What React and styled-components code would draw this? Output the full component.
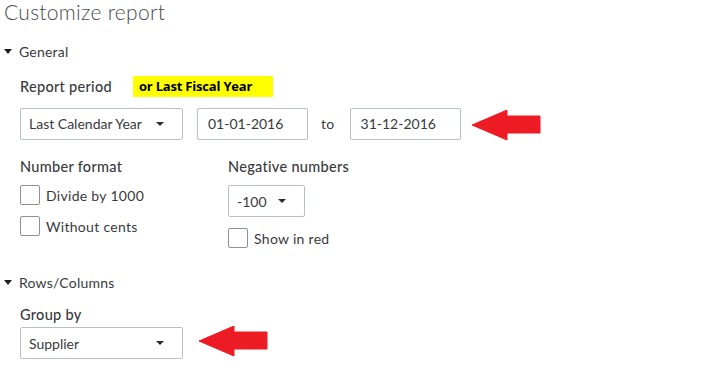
import React from "react";
import styled, { createGlobalStyle } from "styled-components";

const ink = "#393a3d";
const line = "#babec5";
const red = "#ed1c24";

const GlobalStyle = createGlobalStyle`
  html, body {
    margin: 0;
    padding: 0;
    background: #fff;
  }
  body {
    font-family: "Lato", "Open Sans", sans-serif;
    color: ${ink};
  }
`;

const Page = styled.div`
  width: 719px;
  height: 373px;
  overflow: hidden;
  padding: 0 0 0 4px;
  box-sizing: border-box;
`;

const Title = styled.h1`
  margin: 0;
  font-size: 21px;
  font-weight: 300;
  line-height: 24px;
  color: #4a4b4e;
  letter-spacing: 0.3px;
`;

const SectionHead = styled.div`
  display: flex;
  align-items: center;
  gap: 7px;
  height: 16px;
  margin-top: ${(p) => p.$top}px;
  font-size: 14px;
  letter-spacing: 0.2px;
`;

const Caret = styled.span`
  width: 0;
  height: 0;
  border-left: 4.5px solid transparent;
  border-right: 4.5px solid transparent;
  border-top: 5px solid #1f1f1f;
`;

const Body = styled.div`
  padding-left: 16px;
`;

const LabelRow = styled.div`
  display: flex;
  align-items: center;
  margin-top: ${(p) => p.$top}px;
  height: ${(p) => p.$h || 16}px;
`;

const Label = styled.div`
  font-size: 14.5px;
  font-weight: 500;
  color: ${ink};
  line-height: 16px;
  letter-spacing: 0.3px;
`;

const Highlight = styled.div`
  margin-left: 21px;
  width: 140px;
  height: 21px;
  background: #ffff00;
  color: #000;
  font-family: "Open Sans", sans-serif;
  font-weight: 700;
  font-size: 13px;
  line-height: 21px;
  padding-left: 6px;
  box-sizing: border-box;
  letter-spacing: -0.2px;
`;

const ControlRow = styled.div`
  display: flex;
  align-items: center;
  margin-top: ${(p) => p.$top}px;
`;

const Select = styled.div`
  display: flex;
  align-items: center;
  justify-content: space-between;
  width: ${(p) => p.$w}px;
  height: ${(p) => p.$h || 32}px;
  margin-top: ${(p) => p.$top || 0}px;
  box-sizing: border-box;
  border: 1px solid ${line};
  border-radius: 2px;
  padding: 0 18px 0 8px;
  font-size: 14px;
  color: ${ink};
`;

const SmallCaret = styled.span`
  width: 0;
  height: 0;
  border-left: 4px solid transparent;
  border-right: 4px solid transparent;
  border-top: 4px solid #2b2b2b;
`;

const DateBox = styled.div`
  width: 111px;
  height: 32px;
  box-sizing: border-box;
  border: 1px solid ${line};
  border-radius: 2px;
  margin-left: ${(p) => p.$left}px;
  padding-left: 10px;
  display: flex;
  align-items: center;
  font-size: 14px;
`;

const To = styled.span`
  margin-left: 13px;
  font-size: 14px;
  letter-spacing: 0.3px;
`;

const Arrow = styled.svg`
  margin-left: ${(p) => p.$left}px;
  margin-top: ${(p) => p.$top || 0}px;
  flex: none;
`;

const Columns = styled.div`
  display: flex;
  margin-top: 18px;
`;

const Column = styled.div`
  width: ${(p) => p.$w}px;
  display: flex;
  flex-direction: column;
`;

const CheckRow = styled.label`
  display: flex;
  align-items: center;
  gap: 6px;
  margin-top: ${(p) => p.$top}px;
  font-size: 14px;
  letter-spacing: 0.3px;
  height: 20px;
`;

const Box = styled.span`
  width: 20px;
  height: 20px;
  box-sizing: border-box;
  border: 1px solid #8d9096;
  border-radius: 2px;
  background: #fff;
  flex: none;
`;

const RedArrow = ({ left, top }) => (
  <Arrow $left={left} $top={top} width="69" height="31" viewBox="0 0 69 31">
    <path
      d="M0 15 L35 0 L35 6 L68 6 L68 23 L35 23 L35 30 Z"
      fill={red}
      stroke={red}
      strokeWidth="1"
      strokeLinejoin="round"
    />
  </Arrow>
);

export default function App() {
  return (
    <Page>
      <GlobalStyle />
      <Title>Customize report</Title>

      <SectionHead $top={19}>
        <Caret />
        General
      </SectionHead>
      <Body>
        <LabelRow $top={17} $h={21}>
          <Label>Report period</Label>
          <Highlight>or Last Fiscal Year</Highlight>
        </LabelRow>
        <ControlRow $top={9}>
          <Select $w={163}>
            Last Calendar Year
            <SmallCaret />
          </Select>
          <DateBox $left={14}>01-01-2016</DateBox>
          <To>to</To>
          <DateBox $left={15}>31-12-2016</DateBox>
          <RedArrow left={11} top={4} />
        </ControlRow>

        <Columns>
          <Column $w={208}>
            <Label>Number format</Label>
            <CheckRow $top={10}>
              <Box />
              Divide by 1000
            </CheckRow>
            <CheckRow $top={11}>
              <Box />
              Without cents
            </CheckRow>
          </Column>
          <Column $w={200}>
            <Label>Negative numbers</Label>
            <Select $w={77} $top={10}>
              -100
              <SmallCaret />
            </Select>
            <CheckRow $top={11}>
              <Box />
              Show in red
            </CheckRow>
          </Column>
        </Columns>
      </Body>

      <SectionHead $top={26}>
        <Caret />
        Rows/Columns
      </SectionHead>
      <Body>
        <LabelRow $top={17}>
          <Label>Group by</Label>
        </LabelRow>
        <ControlRow $top={4}>
          <Select $w={163}>
            Supplier
            <SmallCaret />
          </Select>
          <RedArrow left={16} top={-4} />
        </ControlRow>
      </Body>
    </Page>
  );
}
